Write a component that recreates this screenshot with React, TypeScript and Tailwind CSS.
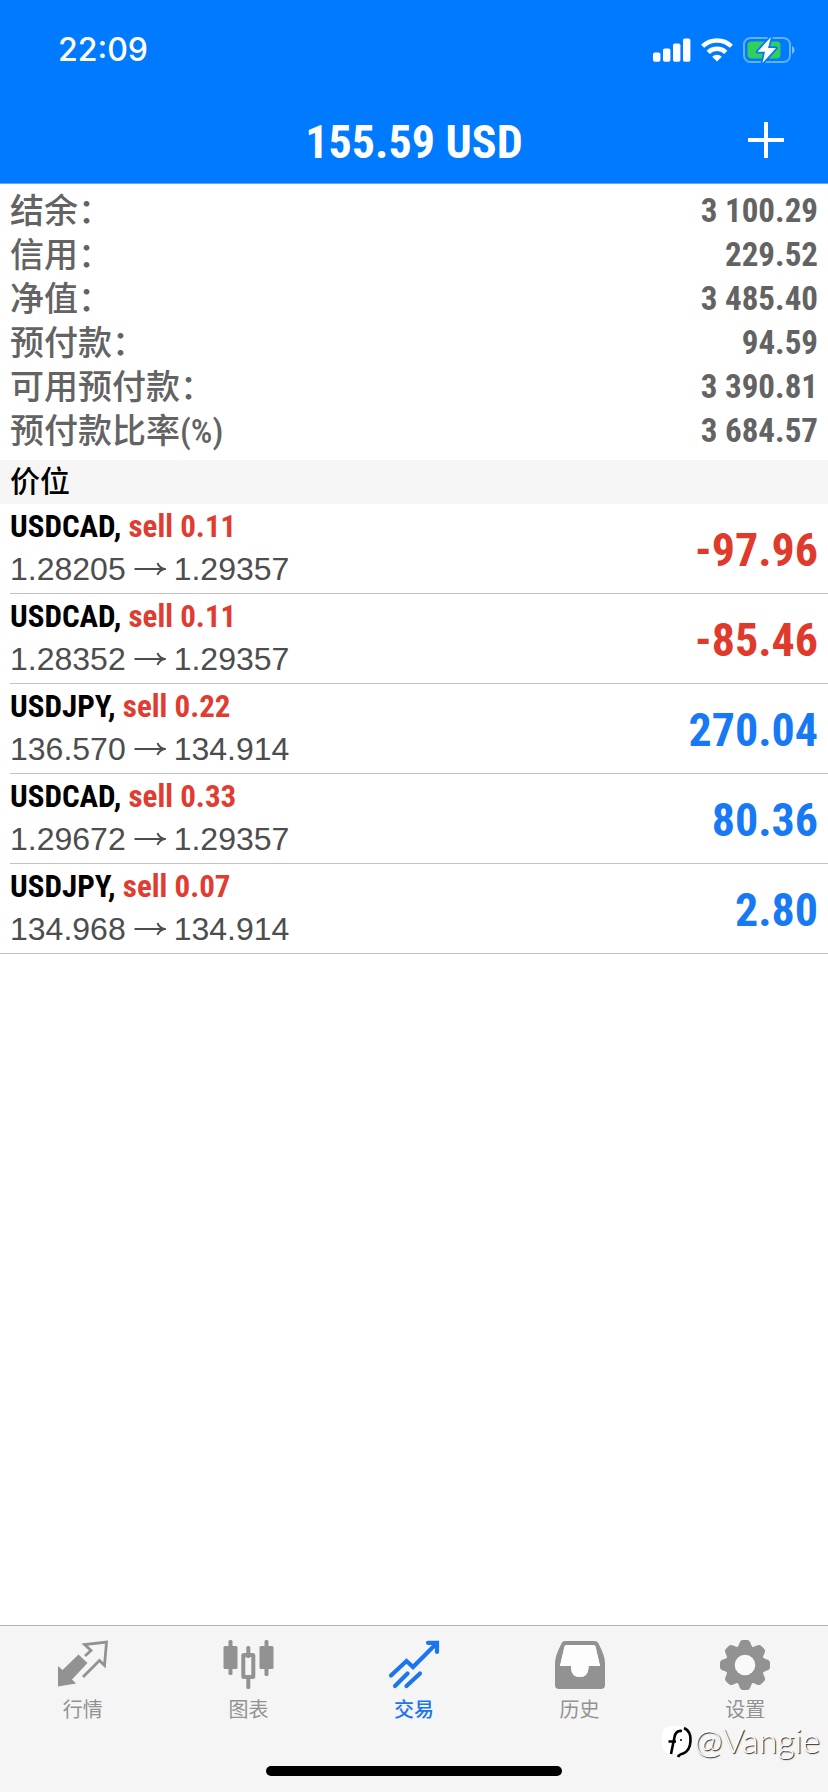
import type { ReactNode } from "react";
import clsx from "clsx";

const summary = [
    { label: "结余：", value: "3 100.29" },
    { label: "信用：", value: "229.52" },
    { label: "净值：", value: "3 485.40" },
    { label: "预付款：", value: "94.59" },
    { label: "可用预付款：", value: "3 390.81" },
    { label: "预付款比率(%)", value: "3 684.57" },
];

const positions = [
    { symbol: "USDCAD", side: "sell 0.11", open: "1.28205", current: "1.29357", profit: -97.96 },
    { symbol: "USDCAD", side: "sell 0.11", open: "1.28352", current: "1.29357", profit: -85.46 },
    { symbol: "USDJPY", side: "sell 0.22", open: "136.570", current: "134.914", profit: 270.04 },
    { symbol: "USDCAD", side: "sell 0.33", open: "1.29672", current: "1.29357", profit: 80.36 },
    { symbol: "USDJPY", side: "sell 0.07", open: "134.968", current: "134.914", profit: 2.8 },
];

// Status bar: clock, signal, wifi, battery
function StatusBar() {
    return (
        <div className="flex items-center justify-between pt-7 pr-8 pl-14">
            <span className="px-0.5 font-['Inter',sans-serif] text-[32px] leading-11 font-medium">22:09</span>
            <div className="flex items-center gap-2.5">
                <svg width="38" height="24" viewBox="0 0 38 24" fill="currentColor" aria-hidden="true">
                    <rect x="0" y="14.5" width="7.4" height="9.2" rx="1.8" />
                    <rect x="10" y="10.5" width="7.4" height="13.2" rx="1.8" />
                    <rect x="20" y="5.5" width="7.4" height="18.2" rx="1.8" />
                    <rect x="30" y="0.5" width="7.4" height="23.2" rx="1.8" />
                </svg>
                <svg width="32" height="24" viewBox="0 0 32 24" fill="none" stroke="currentColor" strokeWidth="4.4" aria-hidden="true">
                    <path d="M1.6 8.3 A20.6 20.6 0 0 1 30.4 8.3" />
                    <path d="M7.2 14.4 A12.6 12.6 0 0 1 24.8 14.4" />
                    <path d="M16 23.6 L11.2 18.8 A6.8 6.8 0 0 1 20.8 18.8 Z" fill="currentColor" stroke="none" />
                </svg>
                <svg width="53" height="28" viewBox="0 0 53 28" aria-hidden="true">
                    <rect x="1" y="2" width="46" height="24" rx="6.5" fill="none" stroke="#fff" strokeOpacity="0.4" strokeWidth="2" />
                    <path d="M49 10 C52.3 11.6 52.3 16.4 49 18 Z" fill="#fff" fillOpacity="0.5" />
                    <rect x="4.500" y="5.500" width="33" height="17" rx="4" fill="#32d058" />
                    <path d="M28 1 L14.500 15.800 L22 15.800 L19.500 27 L33 12 L25 12 Z" fill="#fff" stroke="#007aff" strokeWidth="3.500" strokeLinejoin="round" paintOrder="stroke" />
                </svg>
            </div>
        </div>
    );
}

function PriceArrow() {
    return (
        <svg width="32" height="14" viewBox="0 0 32 14" fill="none" stroke="currentColor" strokeWidth="2" role="img" aria-label="→">
            <path d="M0.500 7 H30" />
            <path d="M23.500 1 Q25 5.500 30.500 7 Q25 8.500 23.500 13" />
        </svg>
    );
}

function QuotesIcon() {
    return (
        <svg width="52" height="50" viewBox="0 0 52 50" aria-hidden="true">
            <path d="M1 26 L5.500 30 L21.500 14.500 L30.500 23 L15 39.500 L19 43.500 L1 46.500 Z" fill="currentColor" />
            <path d="M28 16 L34 10.500 L27.500 4.500 L49.500 2 L47.500 25.500 L42.500 20.500 L26 37" fill="none" stroke="currentColor" strokeWidth="2.800" />
        </svg>
    );
}

function ChartIcon() {
    return (
        <svg width="52" height="50" viewBox="0 0 52 50" fill="currentColor" aria-hidden="true">
            <rect x="6.500" y="0" width="4" height="35" rx="1.500" />
            <rect x="1.500" y="6" width="14" height="23" rx="1.500" />
            <rect x="24.300" y="6" width="4" height="12" rx="1.500" />
            <rect x="24.300" y="37" width="4" height="12" rx="1.500" />
            <rect x="21.300" y="15" width="10" height="22" rx="0.500" fill="none" stroke="currentColor" strokeWidth="4" />
            <rect x="42.500" y="0" width="4" height="36" rx="1.500" />
            <rect x="37.500" y="6" width="14" height="23" rx="1.500" />
        </svg>
    );
}

function TradeIcon() {
    return (
        <svg width="52" height="50" viewBox="0 0 52 50" fill="none" stroke="currentColor" strokeWidth="4.200" strokeLinecap="round" aria-hidden="true">
            <path d="M3 35.500 L18.500 21 L25 27 L47 5" />
            <path d="M40 2.800 L49 2.800 L49 12" />
            <path d="M42 2.500 L49.500 2.500 L49.500 10 Z" fill="currentColor" stroke="none" />
            <path d="M7 46 L19.500 33.500 M18.500 46 L32 33.500" />
        </svg>
    );
}

function HistoryIcon() {
    return (
        <svg width="52" height="50" viewBox="0 0 52 50" aria-hidden="true">
            <path
                d="M11 1 H40.500 Q44 1 45 4.500 Q51 16 51 23 V45 Q51 49 47 49 H5 Q1 49 1 45 V23 Q1 16 7 4.500 Q8 1 11 1 Z M12.500 5 Q11 5 10.500 6.500 L6 26 H17 V28 Q17.500 37 25.800 37 Q34 37 34.500 28 V26 H46 L41.500 6.500 Q41 5 39.500 5 Z"
                fill="currentColor"
                fillRule="evenodd"
            />
            <path d="M12.500 5 Q11 5 10.500 6.500 L6 26 H17 V28 Q17.500 37 25.800 37 Q34 37 34.500 28 V26 H46 L41.500 6.500 Q41 5 39.500 5 Z" fill="#fdfdfd" />
        </svg>
    );
}

function SettingsIcon() {
    return (
        <svg width="52" height="50" viewBox="0 0 52 50" aria-hidden="true">
            <g fill="currentColor">
                {[0, 45, 90, 135, 180, 225, 270, 315].map((angle) => (
                    <path key={angle} d="M16 9 Q19 8 20.500 3 Q21.500 0 24 0 H28 Q30.500 0 31.500 3 Q33 8 36 9 L26 20 Z" transform={`rotate(${angle} 26 25)`} />
                ))}
            </g>
            <circle cx="26" cy="25" r="14.500" fill="none" stroke="currentColor" strokeWidth="8.500" />
            <circle cx="26" cy="25" r="10.300" fill="#f9f9f9" />
        </svg>
    );
}

const tabs: { label: string; icon: ReactNode; active?: boolean }[] = [
    { label: "行情", icon: <QuotesIcon /> },
    { label: "图表", icon: <ChartIcon /> },
    { label: "交易", icon: <TradeIcon />, active: true },
    { label: "历史", icon: <HistoryIcon /> },
    { label: "设置", icon: <SettingsIcon /> },
];

// Author mark over the bottom right corner
function AuthorMark() {
    return (
        <div className="absolute right-2 bottom-7 flex items-center">
            <svg width="32" height="34" viewBox="0 0 32 34" aria-hidden="true">
                <rect x="0" y="1" width="28" height="28" rx="9" fill="#fff" />
                <path d="M22 3 Q29 6 28.500 16 Q28 26 21 28.500 Q17 29.500 16 32" fill="none" stroke="#000" strokeWidth="2.600" />
                <path d="M20 6 Q14 5 12.500 12 L9 29 M6.500 16.500 H14" fill="none" stroke="#000" strokeWidth="2.600" />
                <circle cx="19" cy="15" r="1" fill="#000" />
            </svg>
            <span className="pb-1 font-['Lato',sans-serif] text-[34px] leading-10 font-light text-white [text-shadow:1px_1px_1px_#222]">@Vangie</span>
        </div>
    );
}

export default function App() {
    return (
        <div className="relative flex min-h-screen flex-col bg-white font-['Roboto_Condensed','Roboto','Noto_Sans_CJK_SC',sans-serif]">
            {/* Header */}
            <header className="border-b border-[#6ca4f0] bg-[#007aff] text-white">
                <StatusBar />
                <div className="grid grid-cols-[1fr_auto_1fr] items-center px-11 pt-[38px] pb-[13px]">
                    <h1 className="col-start-2 pt-1 text-[46px] leading-14 font-bold">155.59 USD</h1>
                    <button type="button" aria-label="新订单" className="justify-self-end">
                        <svg width="36" height="36" viewBox="0 0 36 36" stroke="currentColor" strokeWidth="4" aria-hidden="true">
                            <path d="M18 0 V36 M0 18 H36" />
                        </svg>
                    </button>
                </div>
            </header>

            <main className="flex-1">
                {/* Account summary */}
                <dl className="px-2.5 pt-[5px] pb-[7px] text-[#636363]">
                    {summary.map((row) => (
                        <div key={row.label} className="flex justify-between">
                            <dt className="text-[34px] leading-11 font-medium">{row.label}</dt>
                            <dd className="text-[33px] leading-11 font-bold">{row.value}</dd>
                        </div>
                    ))}
                </dl>

                {/* Open positions */}
                <h2 className="bg-[#f6f6f6] px-2.5 text-[30px] leading-11 font-medium text-black">价位</h2>
                <ul className="border-b border-[#c2c4c4]">
                    {positions.map((p, i) => (
                        <li key={i} className="pl-2.5">
                            <div className={clsx("flex items-center justify-between pr-2.5", i < positions.length - 1 && "border-b border-[#c2c4c4]")}>
                                <div className="pt-0.5 pb-[3px]">
                                    <p className="text-[31px] leading-[42px] font-bold text-black">
                                        {p.symbol}, <span className="text-[#e03c31]">{p.side}</span>
                                    </p>
                                    <p className="flex items-center gap-2 font-['Liberation_Sans',sans-serif] text-[32px] leading-[42px] text-[#4d4d4d]">
                                        {p.open}
                                        <PriceArrow />
                                        {p.current}
                                    </p>
                                </div>
                                <span className={clsx("pt-0.5 text-[46px] leading-14 font-bold", p.profit < 0 ? "text-[#e03a2c]" : "text-[#1879f4]")}>
                                    {p.profit.toFixed(2)}
                                </span>
                            </div>
                        </li>
                    ))}
                </ul>
            </main>

            {/* Tab bar */}
            <footer className="border-t border-[#b2b2b2] bg-[#f5f5f5]">
                <nav className="grid grid-cols-5 pt-3.5">
                    {tabs.map((tab) => (
                        <button
                            key={tab.label}
                            type="button"
                            className={clsx("flex flex-col items-center gap-1", tab.active ? "font-medium text-[#1b76ee]" : "text-[#929292]")}
                        >
                            {tab.icon}
                            <span className="text-[20px] leading-8">{tab.label}</span>
                        </button>
                    ))}
                </nav>
                <div className="flex justify-center pt-10 pb-4">
                    <div className="h-2.5 w-[296px] rounded-full bg-black" />
                </div>
            </footer>
            <AuthorMark />
        </div>
    );
}
